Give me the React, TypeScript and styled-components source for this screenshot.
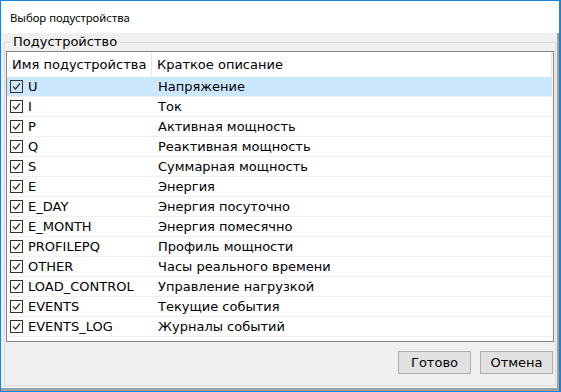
import styled, { createGlobalStyle } from 'styled-components';

const GlobalStyle = createGlobalStyle`
  html, body {
    margin: 0;
    padding: 0;
    background: #ffffff;
  }
  * {
    box-sizing: border-box;
  }
`;

const Window = styled.div`
  width: 561px;
  height: 392px;
  display: flex;
  flex-direction: column;
  border: 1px solid #1883d7;
  border-right-width: 2px;
  background: #ffffff;
  font-family: 'DejaVu Sans', sans-serif;
  font-size: 13px;
  color: #000;
`;

const TitleBar = styled.div`
  height: 32px;
  display: flex;
  align-items: center;
  padding-left: 9px;
  font-family: 'Noto Sans', sans-serif;
  font-size: 11.3px;
  background: #ffffff;
`;

const Body = styled.div`
  flex: 1;
  display: flex;
  flex-direction: column;
  background: #f0f0f0;
  padding: 2px 1px 0 3px;
  border-right: 2px solid #a0a0a0;
  border-bottom: 3px solid #a0a0a0;
`;

const Group = styled.fieldset`
  flex: 1;
  margin: 0 0 2px 0;
  padding: 0 0 0 1px;
  border: 1px solid #dcdcdc;
  display: flex;
  flex-direction: column;
  min-width: 0;
`;

const Legend = styled.legend`
  margin-left: 5px;
  padding: 0 2px;
  font-size: 13px;
  line-height: 14px;
`;

const List = styled.div`
  margin-top: 2px;
  height: 291px;
  margin-right: 1px;
  border: 1px solid #828790;
  background: #ffffff;
  overflow: hidden;
`;

const HeaderRow = styled.div`
  display: flex;
  height: 25px;
  margin-right: 1px;
  border-right: 1px solid #e5e5e5;
`;

const HeaderCell = styled.div<{ $first?: boolean }>`
  display: flex;
  align-items: center;
  padding-left: 5px;
  white-space: nowrap;
  width: ${(p) => (p.$first ? '145px' : 'auto')};
  flex: ${(p) => (p.$first ? 'none' : '1')};
  border-right: ${(p) => (p.$first ? '1px solid #e5e5e5' : 'none')};
`;

const Row = styled.div<{ $selected?: boolean }>`
  display: flex;
  height: 20px;
  margin-right: 1px;
  border-bottom: 1px solid #f0f0f0;
  background: ${(p) => (p.$selected ? '#cce8ff' : 'transparent')};
`;

const Cell = styled.div<{ $first?: boolean }>`
  display: flex;
  align-items: center;
  white-space: nowrap;
  width: ${(p) => (p.$first ? '145px' : 'auto')};
  flex: ${(p) => (p.$first ? 'none' : '1')};
  padding-left: ${(p) => (p.$first ? '3px' : '6px')};
  gap: 5px;
`;

const Check = styled.span`
  width: 13px;
  height: 13px;
  flex: none;
  border: 1px solid #333333;
  display: inline-flex;
  align-items: center;
  justify-content: center;
`;

const Footer = styled.div`
  display: flex;
  justify-content: flex-end;
  gap: 9px;
  padding: 9px 2px 0 0;
`;

const Button = styled.button`
  width: 73px;
  height: 23px;
  border: 1px solid #adadad;
  background: #e1e1e1;
  font-family: 'DejaVu Sans', sans-serif;
  font-size: 13px;
  color: #000;
  padding: 0;
`;

const rows = [
  ['U', 'Напряжение'],
  ['I', 'Ток'],
  ['P', 'Активная мощность'],
  ['Q', 'Реактивная мощность'],
  ['S', 'Суммарная мощность'],
  ['E', 'Энергия'],
  ['E_DAY', 'Энергия посуточно'],
  ['E_MONTH', 'Энергия помесячно'],
  ['PROFILEPQ', 'Профиль мощности'],
  ['OTHER', 'Часы реального времени'],
  ['LOAD_CONTROL', 'Управление нагрузкой'],
  ['EVENTS', 'Текущие события'],
  ['EVENTS_LOG', 'Журналы событий'],
];

const Tick = () => (
  <svg width="11" height="11" viewBox="0 0 11 11">
    <path d="M2 5.5 L4.5 8 L9 2.5" fill="none" stroke="#333" strokeWidth="1.2" />
  </svg>
);

const App = () => (
  <>
    <GlobalStyle />
    <Window>
      <TitleBar>Выбор подустройства</TitleBar>
      <Body>
        <Group>
          <Legend>Подустройство</Legend>
          <List>
            <HeaderRow>
              <HeaderCell $first>Имя подустройства</HeaderCell>
              <HeaderCell>Краткое описание</HeaderCell>
            </HeaderRow>
            {rows.map(([name, desc], i) => (
              <Row key={name} $selected={i === 0}>
                <Cell $first>
                  <Check>
                    <Tick />
                  </Check>
                  {name}
                </Cell>
                <Cell>{desc}</Cell>
              </Row>
            ))}
          </List>
          <Footer>
            <Button>Готово</Button>
            <Button>Отмена</Button>
          </Footer>
        </Group>
      </Body>
    </Window>
  </>
);

export default App;
